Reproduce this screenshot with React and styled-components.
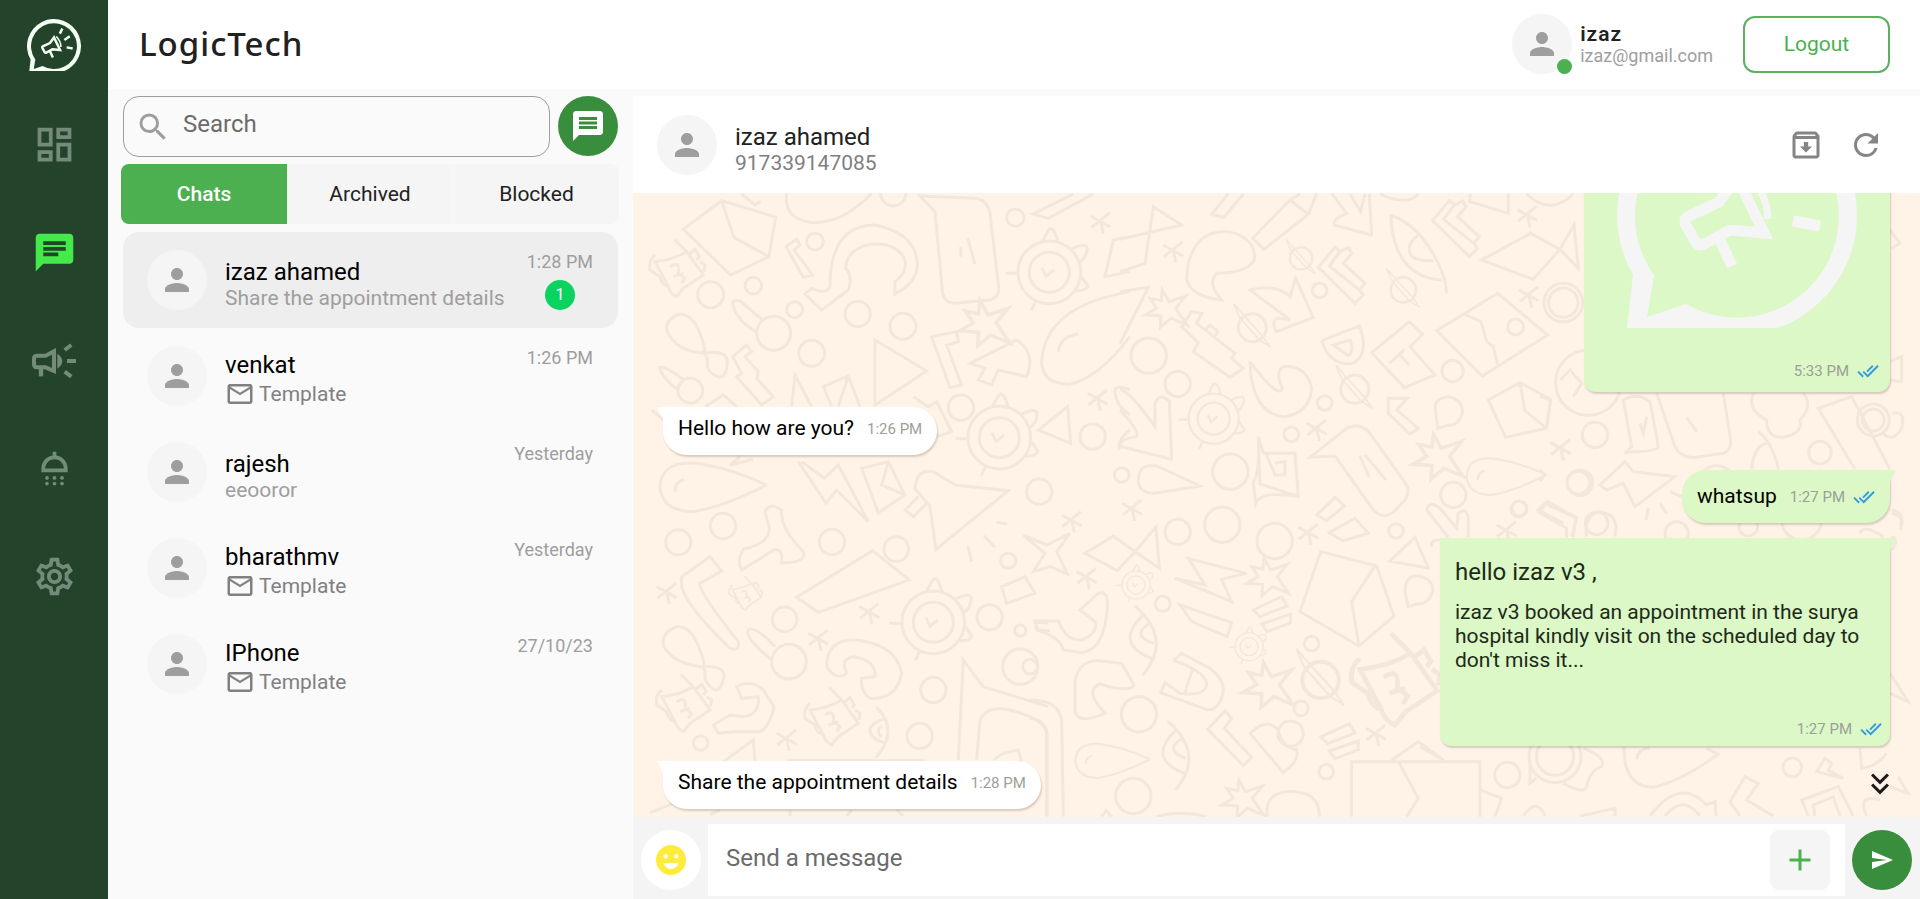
import React from "react";
import styled, { createGlobalStyle, css } from "styled-components";
import {
  MdOutlineDashboard,
  MdChat,
  MdOutlineShower,
  MdOutlineSettings,
  MdSearch,
  MdMessage,
  MdPerson,
  MdMailOutline,
  MdOutlineArchive,
  MdRefresh,
  MdDoneAll,
  MdKeyboardDoubleArrowDown,
  MdEmojiEmotions,
  MdAdd,
  MdSend,
} from "react-icons/md";

const GlobalStyle = createGlobalStyle`
  *, *::before, *::after { box-sizing: border-box; }
  body {
    margin: 0;
    background: #fafafa;
    color: #212121;
    font-family: Roboto, "Liberation Sans", sans-serif;
  }
  button, input { font: inherit; }
  button { border: 0; padding: 0; background: none; color: inherit; cursor: pointer; }
  h1, h2, p, ul { margin: 0; padding: 0; }
  ul { list-style: none; }
  svg { display: block; flex: none; }
`;

/* ---------- shell ---------- */

const Shell = styled.div`
  display: flex;
  height: 100vh;
  min-height: 600px;
`;

const Sidebar = styled.nav`
  flex: 0 0 108px;
  background: #23442b;
`;

const Brand = styled.a`
  display: flex;
  align-items: center;
  justify-content: center;
  height: 90px;
  color: #f4fff4;
`;

const NavLink = styled.a`
  display: flex;
  align-items: center;
  justify-content: center;
  height: 108px;
  color: ${(p) => (p.$active ? "#43ea4a" : "#748b79")};
`;

const Main = styled.div`
  flex: 1;
  min-width: 0;
  display: flex;
  flex-direction: column;
`;

const TopBar = styled.header`
  flex: 0 0 89px;
  display: flex;
  align-items: center;
  padding: 0 30px 1px 31px;
  background: #fff;
`;

const Title = styled.h1`
  flex: 1;
  font-family: "Noto Sans", "Open Sans", sans-serif;
  font-size: 33px;
  font-weight: 500;
  line-height: 40px;
  letter-spacing: 1px;
`;

const Account = styled.div`
  display: flex;
  align-items: center;
  gap: 8px;
  margin-right: 30px;
`;

const AccountName = styled.p`
  font-size: 21px;
  font-weight: 600;
  line-height: 24px;
  letter-spacing: 1px;
`;

const AccountMail = styled.p`
  font-size: 18px;
  line-height: 20px;
  color: #9e9e9e;
`;

const LogoutButton = styled.button`
  width: 147px;
  height: 57px;
  border: 2px solid #5cb060;
  border-radius: 12px;
  color: #4caf50;
  font-size: 21px;
`;

const Avatar = styled.span`
  position: relative;
  flex: none;
  display: flex;
  align-items: center;
  justify-content: center;
  width: 60px;
  height: 60px;
  border-radius: 50%;
  background: #f5f5f5;
  color: #9e9e9e;
`;

const OnlineDot = styled.span`
  position: absolute;
  right: 0;
  bottom: 0;
  width: 15px;
  height: 15px;
  border-radius: 50%;
  background: #4caf50;
`;

const Workspace = styled.div`
  flex: 1;
  min-height: 0;
  display: flex;
  padding-top: 7px;
`;

/* ---------- chat list ---------- */

const ListPane = styled.section`
  flex: 0 0 525px;
  padding: 0 14px 0 13px;
`;

const SearchRow = styled.div`
  display: flex;
  gap: 8px;
  padding: 0 1px 0 2px;
`;

const SearchBox = styled.label`
  flex: 1;
  display: flex;
  align-items: center;
  gap: 12px;
  height: 61px;
  padding: 0 11px;
  border: 1px solid #9e9e9e;
  border-radius: 16px;
  color: #9e9e9e;
`;

const PlainInput = styled.input`
  flex: 1;
  min-width: 0;
  height: 34px;
  padding: 0 0 5px;
  border: 0;
  outline: 0;
  background: none;
  font-size: 24px;
  color: #212121;
  &::placeholder { color: #6b6b6b; opacity: 1; }
`;

const RoundButton = styled.button`
  flex: none;
  display: flex;
  align-items: center;
  justify-content: center;
  width: 60px;
  height: 60px;
  border-radius: 50%;
  background: ${(p) => (p.$light ? "#fff" : "#388e3c")};
  color: ${(p) => (p.$light ? "#ffeb3b" : "#fff")};
`;

const Tabs = styled.div`
  display: grid;
  grid-template-columns: repeat(3, 1fr);
  height: 60px;
  margin: 7px 0 8px;
  border-radius: 8px;
  overflow: hidden;
  background: #f5f5f5;
`;

const Tab = styled.button`
  font-size: 21px;
  color: #212121;
  ${(p) => p.$active && css`background: #4caf50; color: #fff; font-weight: 500;`}
  & + & + & { border-left: 1px solid #f9f9f9; }
`;

const ChatItem = styled.button`
  display: flex;
  align-items: center;
  gap: 18px;
  width: calc(100% - 3px);
  height: 96px;
  margin: 0 1px 0 2px;
  padding: 0 25px 0 24px;
  border-radius: 16px;
  text-align: left;
  background: ${(p) => (p.$active ? "#eeeeee" : "transparent")};
`;

const ChatText = styled.span`
  flex: 1;
  min-width: 0;
  padding-top: 8px;
`;

const ChatName = styled.span`
  display: block;
  font-size: 24px;
  line-height: 28px;
  color: #000;
`;

const ChatPreview = styled.span`
  display: block;
  font-size: 21px;
  line-height: 24px;
  white-space: nowrap;
  color: #9e9e9e;
`;

const TemplatePreview = styled.span`
  display: flex;
  align-items: center;
  gap: 4px;
  height: 30px;
  font-size: 21px;
  color: #808080;
`;

const ChatMeta = styled.span`
  align-self: stretch;
  display: flex;
  flex-direction: column;
  align-items: center;
  gap: 6px;
  padding-top: 18px;
  font-size: 18px;
  line-height: 24px;
  white-space: nowrap;
  color: #9e9e9e;
`;

const Badge = styled.span`
  width: 30px;
  height: 30px;
  border-radius: 50%;
  background: #0bd35f;
  color: #fff;
  font-size: 16px;
  line-height: 30px;
  text-align: center;
`;

/* ---------- conversation ---------- */

const Conversation = styled.section`
  flex: 1;
  min-width: 0;
  display: flex;
  flex-direction: column;
`;

const ContactBar = styled.header`
  flex: 0 0 97px;
  display: flex;
  align-items: center;
  gap: 18px;
  padding: 0 36px 0 24px;
  background: #fff;
`;

const ContactInfo = styled.div`
  flex: 1;
  padding-top: 8px;
`;

const ContactName = styled.h2`
  font-size: 24px;
  font-weight: 400;
  line-height: 28px;
`;

const ContactPhone = styled.p`
  font-size: 21px;
  line-height: 24px;
  color: #808080;
`;

const IconButton = styled.button`
  display: flex;
  color: #858585;
  margin-left: 6px;
`;

const Thread = styled.div`
  position: relative;
  flex: 1;
  min-height: 0;
  overflow: hidden;
  display: flex;
  flex-direction: column;
  justify-content: flex-end;
  background: #fff3e7;
`;

const Wallpaper = styled.svg`
  position: absolute;
  inset: 0;
  width: 100%;
  height: 100%;
  fill: none;
  stroke: #f3e7db;
  stroke-width: 9;
`;

const Messages = styled.ul`
  position: relative;
  display: flex;
  flex-direction: column;
  gap: 15px;
  padding: 0 30px 8px;
`;

const Bubble = styled.li`
  position: relative;
  display: flex;
  align-self: ${(p) => (p.$mine ? "flex-end" : "flex-start")};
  background: ${(p) => (p.$mine ? "#dbf8c6" : "#fff")};
  border-radius: ${(p) => (p.$mine ? "24px 0 24px 24px" : "0 24px 24px 24px")};
  padding: ${(p) => (p.$mine ? "14px 15px 15px" : "9px 15px 15px")};
  box-shadow: 1px 2px 2px rgba(60, 40, 20, 0.2);
  font-size: 21px;
  line-height: 24px;
  color: #000;
  &::before {
    content: "";
    position: absolute;
    top: 0;
    width: 6px;
    height: 12px;
    background: inherit;
    ${(p) =>
      p.$mine
        ? "right: -6px; clip-path: polygon(0 0, 100% 0, 0 100%);"
        : "left: -6px; clip-path: polygon(0 0, 100% 0, 100% 100%);"}
  }
`;

const CardBubble = styled(Bubble)`
  flex-direction: column;
  width: ${(p) => (p.$wide ? "450px" : "306px")};
  padding: ${(p) => (p.$wide ? "20px 8px 0 15px" : "20px 11px 0 33px")};
  border-radius: 0 0 12px 12px;
`;

const CardTitle = styled.p`
  font-size: 24px;
  line-height: 28px;
  margin-bottom: 14px;
  color: #1d2a18;
`;

const CardBody = styled.p`
  color: #1d2a18;
  padding-right: 16px;
`;

const Stamp = styled.span`
  display: flex;
  align-items: center;
  gap: 8px;
  margin-left: 13px;
  padding-top: 2px;
  font-size: 15px;
  line-height: 22px;
  color: #9b9f99;
  svg { color: #2f9be0; }
`;

const CardStamp = styled(Stamp)`
  align-self: flex-end;
  padding: ${(p) => (p.$wide ? "46px 0 6px" : "32px 0 10px")};
`;

const JumpDown = styled.button`
  position: absolute;
  right: 22px;
  bottom: 15px;
  color: #1b1b1b;
`;

const Composer = styled.form`
  flex: 0 0 82px;
  display: flex;
  align-items: center;
  gap: 7px;
  padding: 7px 8px 3px;
  background: #f4f4f4;
`;

const ComposerField = styled.label`
  flex: 1;
  align-self: stretch;
  display: flex;
  align-items: center;
  padding: 0 15px 0 18px;
  background: #fff;
`;

const AttachButton = styled.button`
  display: flex;
  align-items: center;
  justify-content: center;
  width: 60px;
  height: 60px;
  border-radius: 9px;
  background: #f5f5f5;
  color: #4caf50;
`;

/* ---------- drawings ---------- */

const Logo = ({ width, color }) => (
  <svg width={width} viewBox="0 0 240 233" aria-hidden="true">
    <path
      fill={color}
      fillRule="evenodd"
      d="M16 180A120 120 0 1 1 161 233H10ZM37 180L30 222L69 209A102 102 0 1 0 37 180Z"
    />
    <g fill="none" stroke={color} strokeWidth="11">
      <path d="M72 121Q66 124 69 130L78 146Q81 152 87 149L113 135L147 138L120 82L102 107Z" />
      <path d="M102 143L115 171M176 126L203 131M166 93L190 77M146 65L157 43" />
      <path d="M130 78Q150 98 151 124" strokeWidth="7" />
    </g>
  </svg>
);

const CampaignIcon = () => (
  <svg width="44" height="35" viewBox="0 0 132 105" fill="none" stroke="currentColor" strokeWidth="12" aria-hidden="true">
    <path d="M66 25L41 38H15Q6 38 6 47V64Q6 73 15 73H41L66 84Z" />
    <path d="M27 74V100" strokeWidth="13" />
    <path d="M76 32Q106 54 76 77Z" fill="currentColor" stroke="none" />
    <path d="M98 21L118 6M105 54H132M98 86L118 101" />
  </svg>
);

const Gear = ({ at: [x, y, s = 1] }) => (
  <g transform={`translate(${x} ${y}) scale(${s})`}>
    <circle r="94" />
    <circle r="60" />
    <path d="M-20 -94L0 -130Q14 -138 26 -92M66 -70Q112 -92 114 -72Q112 -44 92 -30M94 10L116 42Q108 58 76 54M-132 3H-98M-42 88L-54 114M-22 -14L-10 12L14 -8" />
  </g>
);

const Planet = ({ at: [x, y, s = 1] }) => (
  <g transform={`translate(${x} ${y}) scale(${s})`}>
    <circle r="42" />
    <path d="M-56 -72L-38 -30L20 36L54 58L28 22L-30 -42Z" strokeWidth="5" />
  </g>
);

const Calendar = ({ at: [x, y, s = 1] }) => (
  <g transform={`translate(${x} ${y}) scale(${s})`}>
    <path d="M-17 -112L20 -75L70 -5L10 35L-10 60Q-30 50 -35 30L-75 -45Q-20 -50 20 -75M-75 -65Q-95 -50 -90 -20L-60 0Q-55 25 -35 30M28 -68L45 -82L58 -60L50 -50M60 -45L75 -35L72 -15M-30 -30Q0 -50 -5 -10L15 5L5 20M-20 0L10 -10" />
  </g>
);

const drop = "M160 0Q40 -55 -60 -66Q-160 -70 -160 10Q-150 80 -60 80Q30 65 160 0M-115 20Q-115 -10 -88 -16";
const crossMark = "M-30 -15L30 18M28 -25L-28 20M0 0L8 38";
const starMark = "M-8 -60L12 -25L62 -42L32 -5L66 45L18 25L-14 52L-12 18L-60 15L-25 -5L-45 -35L-12 -28Z";
const blocks = "M-55 -12L30 -52L47 -24L-35 8ZM-30 30L57 0V26L-13 53Z";
const stairs = "M-70 -24L-20 -84L-5 -71L20 -83L30 -66L5 -36L70 24L53 44L65 59L40 84ZM-5 -71L-37 -28L53 44";
const eye = "M-25 -103Q90 -1 -2 104M0 -76Q-90 9 25 54M20 -51Q-40 -16 30 9";

/* Each field is drawn on its own origin, at three units to the pixel. */
const doodles = [
  {
    origin: [630, 90],
    circles: [[790, 310, 38], [1156, 383, 26], [555, 455, 25], [370, 587, 25], [242, 614, 39], [494, 659, 24], [683, 672, 38], [819, 709, 39], [431, 730, 51], [545, 790, 39], [181, 902, 37], [993, 953, 38], [1388, 1040, 38]],
    gears: [[1258, 547], [1108, 1043]],
    calendars: [[150, 560]],
    marks: [[crossMark, 1412, 393], [crossMark, 1403, 925], [starMark, 1060, 705, 1.2]],
    d: "M160 418L275 332L437 381L417 500L302 555ZM275 332L312 443L417 500M470 310Q460 390 550 398Q640 400 725 310M600 590Q600 405 735 405Q860 430 862 525Q860 580 795 612V575Q840 540 820 500Q790 455 725 463Q650 475 647 535Q670 560 655 600L575 660L525 612L545 595Q590 615 600 590M870 318L915 365L938 610Q945 640 975 640L1080 630Q1110 620 1106 590L1080 370Q1070 325 1030 325ZM1013 445L1035 522M992 470V500M1330 312L1210 372L1255 385L1390 312M1500 440L1450 450L1425 560L1500 545M468 470L500 447L510 465L492 480L548 555L520 562ZM335 312L375 345L392 335M398 690L330 633Q300 625 312 655Q325 695 378 725M225 785Q205 675 150 672Q100 690 112 725Q140 785 225 790Q290 780 292 815Q290 860 270 862Q240 855 232 830Q235 800 218 778M145 900Q100 870 88 832Q100 825 160 868M308 800L350 765L365 785L345 800L385 845L380 865L430 920L395 945L320 860L335 850ZM735 750L890 843L735 945ZM485 950L495 855L545 950M605 950L580 890L655 858L690 950M655 858L625 950M905 740L980 725L985 755L950 765L995 885L960 893ZM1020 820L1160 750Q1220 790 1190 860L1105 840L1085 885L1045 870L1065 835ZM1500 605Q1240 650 1235 820Q1240 880 1315 883Q1400 870 1500 740M1285 785Q1290 740 1345 732M1225 1020L1313 950L1322 1060ZM65 960L105 995M225 950L280 915L320 950M850 920L895 950L920 935L965 1025L920 1040M1500 900Q1450 880 1455 910Q1460 950 1500 975M1500 1020Q1460 1050 1470 1080M330 1100L300 1125L370 1108",
  },
  {
    origin: [1120, 180],
    circles: [[599, 331, 22], [86, 527, 53], [173, 612, 38], [998, 573, 32], [614, 669, 22], [514, 763, 22], [1187, 441, 24], [331, 875, 53], [307, 1034, 53], [173, 1056, 38], [464, 1083, 53], [828, 1053, 22], [1000, 945, 38], [1198, 985, 22], [1380, 908, 38], [5, 885, 22], [1330, 368, 58], [1330, 368, 44], [1405, 608, 98]],
    gears: [[281, 716, 0.8]],
    planets: [[543, 235, 0.8], [850, 330, 0.9], [397, 443], [704, 628]],
    marks: [[crossMark, 160, 210], [crossMark, 1222, 104], [crossMark, 1227, 345], [crossMark, 1322, 804], [crossMark, 590, 745], [crossMark, 36, 985], [crossMark, 565, 1057], [crossMark, 1160, 1050], [starMark, 135, 390], [starMark, 950, 835, 1.2], [stairs, 665, 286], [stairs, 1008, 146], [drop, 1160, 885, 0.75]],
    d: "M0 178L185 135L100 80L75 250L0 275M200 300Q205 150 325 155Q410 175 403 240Q380 280 290 280Q260 310 305 360Q215 350 200 300M325 40L275 103L312 112L370 42M398 175L510 60L565 103L432 208ZM540 42L510 60M565 103L590 40M635 40L680 100Q640 115 642 135L755 165L748 42M690 42L722 95L735 42M812 105Q920 145 975 300L980 340M812 105Q820 290 965 300M898 163Q860 190 870 220Q880 245 940 242M1085 240L1232 160L1320 208L1240 298ZM1320 208L1362 135L1375 265ZM0 335L85 322L0 490M185 440L215 395L245 400L230 430L345 520L335 535L370 565L330 592L220 515L235 488ZM255 450L270 435L293 455L282 470M390 330Q470 310 510 350L527 295L580 412L470 455Q450 420 475 415L510 420ZM605 482L718 438Q750 520 700 550Q630 560 605 482M640 495L690 480Q705 510 685 527ZM755 518L868 425L908 463L870 500L945 585L853 623ZM808 550L855 508M835 520L868 555M950 452L1133 340L1283 465L1087 588ZM1030 402L1083 425L1100 485L1120 500L1133 552M805 655H862L830 690L895 745L870 762L805 700ZM953 745L948 700Q935 655 985 650Q1030 660 1027 700Q1015 740 985 735ZM1105 660L1200 608L1292 658L1280 745L1157 772ZM1200 608L1215 692L1280 745M390 545Q395 700 490 710Q570 700 575 625Q560 555 490 560Q465 575 487 625Q475 660 390 545M0 628Q30 635 105 740V670Q120 635 148 665L155 838L5 800Q-10 780 50 770Q60 755 0 690M570 832L680 745Q720 725 750 760L860 915Q875 945 840 975Q800 1030 760 990L645 828ZM720 828L748 892M735 825L798 900M415 770L430 820H525L535 950L420 912ZM415 770Q420 880 400 905L407 970Q425 930 535 950M440 825L465 885M465 850L495 845V885L460 885M55 900Q55 850 110 858L240 918L105 940Q55 940 55 900M590 1005L645 952L673 978L620 1022ZM628 1058L705 1015L745 1060L668 1083ZM985 1072L920 990Q930 960 960 985L1010 1045L1015 1000Q1035 980 1045 1010V1072M935 1100Q930 1080 960 1080M1340 1072V1045L1258 998L1282 965L1368 1012L1360 1072M810 1143L885 1072L925 1165ZM780 42Q860 80 895 42M1050 42V65L1165 100V42M1220 42Q1290 110 1360 42",
  },
  {
    origin: [1540, 180],
    circles: [[1000, 720, 48], [1000, 720, 33], [840, 818, 34], [115, 908, 34], [165, 765, 38], [170, 1030, 34], [530, 915, 58]],
    marks: [[crossMark, 62, 803]],
    d: "M250 660Q290 635 330 665L355 800Q350 815 270 815L255 820L275 800ZM300 730L310 760L320 710M350 640L405 800Q420 835 470 832L550 820Q575 810 572 780L550 640M440 712L470 755M640 640Q620 690 680 720Q680 775 730 772Q790 760 780 720Q820 680 790 640M945 868L835 685L935 650L1050 868M655 755Q700 790 715 868M635 868Q640 800 680 790M180 915L255 845L280 875L405 890L285 980L250 910L200 930ZM1050 150L1080 190L1055 205M1050 545L1085 530V605L1050 600M1055 700Q1100 690 1085 745Q1060 790 1030 760M0 650L32 660L20 740M60 600L90 570L125 610L100 650M390 935L425 950M360 970L380 1000M325 985L318 1020M1055 1000Q1100 1010 1080 1050M0 870L15 885L0 905",
  },
  {
    origin: [1420, 500],
    circles: [[297, 27, 24], [262, 825, 38], [1117, 802, 28], [405, 770, 78], [405, 770, 56], [770, 100, 35], [985, 80, 28], [1145, 60, 60]],
    d: "M500 110Q490 40 545 35Q600 50 585 110M430 70L355 30L375 10L470 55L455 110M0 740L70 780M180 870L245 895L225 950M490 745Q560 770 545 800Q510 810 500 860Q490 885 430 850M330 800V850L350 835M860 745L895 763Q780 845 700 862Q610 860 612 740M650 778Q655 745 690 745M960 948L930 905L975 830L1015 850L980 900L1060 948M1190 815L1215 775L1235 790L1225 810L1270 835ZM690 948Q780 830 860 915L885 905L888 948M735 948Q790 880 840 948M1165 948L1145 900L1255 860L1300 948M1185 948L1180 915L1240 890L1260 948M1320 745L1325 805Q1370 800 1400 760M1340 948Q1310 880 1380 900M1410 520L1465 605L1410 580M1435 830L1465 880L1410 860M1320 100Q1330 70 1390 110M1415 30Q1460 40 1440 75M1415 110Q1440 120 1415 150M310 948Q350 890 375 948M480 948L585 925V948",
  },
  {
    origin: [630, 460],
    circles: [[279, 198, 38], [145, 247, 38], [606, 246, 38], [799, 267, 37], [1228, 95, 38], [464, 478, 37], [477, 605, 52], [1135, 302, 23], [1079, 472, 38], [1171, 512, 17], [1171, 620, 53], [910, 690, 38], [869, 828, 38], [212, 849, 22]],
    gears: [[910, 487]],
    calendars: [[170, 755], [615, 795], [352, 415, 0.6]],
    marks: [[crossMark, 110, 395], [crossMark, 718, 455], [crossMark, 565, 535], [crossMark, 470, 835], [drop, 250, 75]],
    d: "M505 5L588 130L620 90L715 185L625 15L583 55L515 5M695 25L775 5L825 105L745 158ZM775 5L755 75L825 105M855 85Q860 25 910 35L975 75L1135 92L918 268L900 140ZM865 110L825 150L850 170L890 130M1100 187L1132 192M1062 227L1095 262M1013 257L1025 305M405 155Q420 125 455 150Q450 205 520 275Q530 310 455 308Q460 270 435 268L335 330Q320 300 340 268Q420 250 418 205ZM500 412L728 272L838 360L565 457ZM155 350L240 290L275 333L210 370Q205 395 325 545Q330 575 300 565Q170 440 155 380ZM435 560Q380 500 355 508Q340 530 425 600M220 600Q190 495 140 500Q90 520 102 560Q130 610 215 620Q285 615 282 650Q275 690 255 690Q220 670 225 640ZM590 620Q590 535 680 540Q800 555 815 640Q800 720 720 715Q690 695 695 655L735 650Q740 600 670 590Q630 595 650 640Q620 665 590 620M320 680Q360 655 400 690L432 740Q420 800 390 815L310 815L265 820L250 795L300 765L345 770Q390 760 385 710L335 715ZM1115 380L1185 350L1215 400L1130 430ZM1255 490L1215 485L1225 510L1260 512M738 740Q810 810 738 893M765 775Q690 800 740 840L765 850M755 800Q735 810 755 830M985 900L1000 600L1060 680L1255 740M1040 900L1050 780Q1070 735 1140 750Q1255 780 1250 830V1068M1090 900L1120 880L1165 870L1175 905M280 905L370 840L375 905M470 902H885M60 1058L130 1030M240 1065L270 1050M480 1050V1068M650 1068L665 1050M800 1050L820 1068",
  },
  {
    origin: [1030, 520],
    circles: [[398, 251, 23], [327, 583, 53], [310, 828, 53], [845, 371, 22], [813, 565, 22], [889, 755, 22], [782, 641, 38], [0, 440, 22]],
    gears: [[318, 195, 0.45], [657, 380, 0.45]],
    planets: [[872, 480, 1.3]],
    calendars: [[1110, 520, 1.6]],
    marks: [[crossMark, 170, 170], [crossMark, 1038, 640], [crossMark, 125, 0], [starMark, 710, 175], [starMark, 710, 500, 1.2], [starMark, 635, 840], [eye, 340, 361], [eye, 438, 706], [blocks, 725, 282], [blocks, 928, 663], [drop, 248, 718, 0.7]],
    d: "M-20 45L50 75L120 40L80 95L112 162L60 140L10 155L45 100ZM165 100L250 48L315 95L262 152ZM315 95L378 20L388 145ZM475 115L650 160L575 178L605 245L435 175L525 195ZM450 255L605 308L592 350L485 305ZM810 275L872 95L1040 138L1092 288L987 378ZM1035 138L965 245L987 378M1135 260L1125 215Q1125 165 1165 168Q1210 175 1208 215Q1195 255 1160 252ZM15 303H85Q110 365 155 360Q205 340 195 305L150 270L205 220Q235 210 232 260Q225 390 155 398L100 390Q90 350 20 330ZM135 480Q150 420 205 422L275 430L312 495Q300 520 210 492Q160 510 225 580Q130 620 135 560ZM430 422L455 400L540 445Q600 490 570 545Q550 580 520 565L392 518L405 488L450 520Q530 530 530 490Q520 450 430 422M487 450L462 525M533 628L585 573L605 595L583 625L665 712L640 737ZM660 640Q710 590 745 630Q750 675 800 690Q810 720 760 758ZM1085 720L1165 665L1240 720M965 890V725H1350V890M1105 725L1165 835L1130 890M712 890Q700 810 795 815Q870 820 868 890M380 890Q450 870 530 890M0 540Q90 540 95 605L100 890M0 595Q50 600 52 650V890M215 890L228 872L245 890",
  },
];

const DoodleField = ({ origin, circles = [], gears = [], planets = [], calendars = [], marks = [], d }) => (
  <g transform={`translate(${origin[0]} ${origin[1]}) scale(0.3333)`}>
    <path d={d} />
    {circles.map(([x, y, r]) => <circle key={`${x}-${y}-${r}`} cx={x} cy={y} r={r} />)}
    {gears.map((g) => <Gear key={g.join()} at={g} />)}
    {planets.map((g) => <Planet key={g.join()} at={g} />)}
    {calendars.map((g) => <Calendar key={g.join()} at={g} />)}
    {marks.map(([path, x, y, s = 1]) => (
      <path key={`${x}-${y}`} d={path} transform={`translate(${x} ${y}) scale(${s})`} />
    ))}
  </g>
);

/* ---------- data ---------- */

const chats = [
  { name: "izaz ahamed", preview: "Share the appointment details", time: "1:28 PM", unread: 1 },
  { name: "venkat", template: true, time: "1:26 PM" },
  { name: "rajesh", preview: "eeooror", time: "Yesterday" },
  { name: "bharathmv", template: true, time: "Yesterday" },
  { name: "IPhone", template: true, time: "27/10/23" },
];

const Read = () => <MdDoneAll size={22} aria-label="Read" />;

export default function App() {
  return (
    <>
      <GlobalStyle />
      <Shell>
        <Sidebar aria-label="Main">
          <Brand href="#" aria-label="LogicTech home"><Logo width={54} color="currentColor" /></Brand>
          <NavLink href="#dashboard" aria-label="Dashboard"><MdOutlineDashboard size={45} /></NavLink>
          <NavLink href="#chats" aria-label="Chats" $active><MdChat size={45} /></NavLink>
          <NavLink href="#campaigns" aria-label="Campaigns"><CampaignIcon /></NavLink>
          <NavLink href="#drip" aria-label="Drip"><MdOutlineShower size={45} /></NavLink>
          <NavLink href="#settings" aria-label="Settings"><MdOutlineSettings size={45} /></NavLink>
        </Sidebar>

        <Main>
          <TopBar>
            <Title>LogicTech</Title>
            <Account>
              <Avatar><MdPerson size={36} /><OnlineDot /></Avatar>
              <div>
                <AccountName>izaz</AccountName>
                <AccountMail>izaz@gmail.com</AccountMail>
              </div>
            </Account>
            <LogoutButton type="button">Logout</LogoutButton>
          </TopBar>

          <Workspace>
            <ListPane aria-label="Chat list">
              <SearchRow>
                <SearchBox>
                  <MdSearch size={36} />
                  <PlainInput type="text" placeholder="Search" aria-label="Search" />
                </SearchBox>
                <RoundButton type="button" aria-label="New chat"><MdMessage size={36} /></RoundButton>
              </SearchRow>
              <Tabs>
                <Tab type="button" $active>Chats</Tab>
                <Tab type="button">Archived</Tab>
                <Tab type="button">Blocked</Tab>
              </Tabs>
              <ul>
                {chats.map((chat, i) => (
                  <li key={chat.name}>
                    <ChatItem type="button" $active={i === 0}>
                      <Avatar><MdPerson size={36} /></Avatar>
                      <ChatText>
                        <ChatName>{chat.name}</ChatName>
                        {chat.template ? (
                          <TemplatePreview><MdMailOutline size={30} />Template</TemplatePreview>
                        ) : (
                          <ChatPreview>{chat.preview}</ChatPreview>
                        )}
                      </ChatText>
                      <ChatMeta>
                        {chat.time}
                        {chat.unread && <Badge>{chat.unread}</Badge>}
                      </ChatMeta>
                    </ChatItem>
                  </li>
                ))}
              </ul>
            </ListPane>

            <Conversation aria-label="Conversation">
              <ContactBar>
                <Avatar><MdPerson size={36} /></Avatar>
                <ContactInfo>
                  <ContactName>izaz ahamed</ContactName>
                  <ContactPhone>917339147085</ContactPhone>
                </ContactInfo>
                <IconButton type="button" aria-label="Archive"><MdOutlineArchive size={36} /></IconButton>
                <IconButton type="button" aria-label="Refresh"><MdRefresh size={36} /></IconButton>
              </ContactBar>

              <Thread>
                <Wallpaper viewBox="633 193 1287 624" preserveAspectRatio="xMidYMin slice" aria-hidden="true">
                  {doodles.map((field) => <DoodleField key={field.origin.join()} {...field} />)}
                </Wallpaper>
                <Messages>
                  <CardBubble $mine>
                    <Logo width={240} color="#f5f5f5" />
                    <CardStamp>5:33 PM<Read /></CardStamp>
                  </CardBubble>
                  <Bubble>Hello how are you?<Stamp>1:26 PM</Stamp></Bubble>
                  <Bubble $mine>whatsup<Stamp>1:27 PM<Read /></Stamp></Bubble>
                  <CardBubble $mine $wide>
                    <CardTitle>hello izaz v3 ,</CardTitle>
                    <CardBody>
                      izaz v3 booked an appointment in the surya hospital kindly visit on the scheduled day to
                      don't miss it...
                    </CardBody>
                    <CardStamp $wide>1:27 PM<Read /></CardStamp>
                  </CardBubble>
                  <Bubble>Share the appointment details<Stamp>1:28 PM</Stamp></Bubble>
                </Messages>
                <JumpDown type="button" aria-label="Scroll to latest"><MdKeyboardDoubleArrowDown size={36} /></JumpDown>
              </Thread>

              <Composer onSubmit={(e) => e.preventDefault()}>
                <RoundButton type="button" aria-label="Emoji" $light><MdEmojiEmotions size={36} /></RoundButton>
                <ComposerField>
                  <PlainInput type="text" placeholder="Send a message" aria-label="Send a message" />
                  <AttachButton type="button" aria-label="Attach"><MdAdd size={36} /></AttachButton>
                </ComposerField>
                <RoundButton type="submit" aria-label="Send"><MdSend size={24} /></RoundButton>
              </Composer>
            </Conversation>
          </Workspace>
        </Main>
      </Shell>
    </>
  );
}
